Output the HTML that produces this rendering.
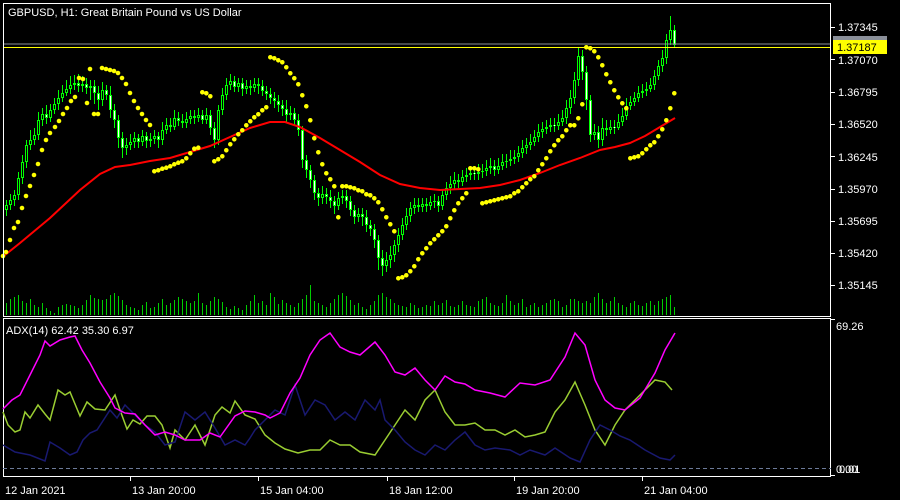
<!DOCTYPE html><html><head><meta charset="utf-8"><style>
body{margin:0;background:#000;width:900px;height:500px;overflow:hidden}
svg{display:block}
text{font-family:"Liberation Sans",sans-serif;font-size:11px;fill:#fff}
</style></head><body>
<svg width="900" height="500" xmlns="http://www.w3.org/2000/svg">
<rect width="900" height="500" fill="#000"/>
<path fill="none" stroke="#0c0" stroke-width="1" d="M6.5 315v-12M10.5 315v-16M14.5 315v-18M18.5 315v-20M22.5 315v-14M26.5 315v-12M30.5 315v-16M34.5 315v-10M38.5 315v-8M42.5 315v-12M46.5 315v-7M50.5 315v-4M54.5 315v-2M58.5 315v-8M62.5 315v-10M66.5 315v-11M70.5 315v-10M74.5 315v-9M78.5 315v-7M82.5 315v-10M86.5 315v-15M90.5 315v-20M94.5 315v-17M98.5 315v-16M102.5 315v-15M106.5 315v-16M110.5 315v-20M114.5 315v-22M118.5 315v-19M122.5 315v-15M126.5 315v-10M130.5 315v-8M134.5 315v-7M138.5 315v-5M142.5 315v-10M146.5 315v-13M150.5 315v-7M154.5 315v-8M158.5 315v-12M162.5 315v-16M166.5 315v-10M170.5 315v-12M174.5 315v-15M178.5 315v-18M182.5 315v-16M186.5 315v-14M190.5 315v-12M194.5 315v-14M198.5 315v-22M202.5 315v-12M206.5 315v-10M210.5 315v-14M214.5 315v-18M218.5 315v-16M222.5 315v-13M226.5 315v-8M230.5 315v-6M234.5 315v-9M238.5 315v-7M242.5 315v-5M246.5 315v-10M250.5 315v-14M254.5 315v-20M258.5 315v-12M262.5 315v-14M266.5 315v-10M270.5 315v-22M274.5 315v-18M278.5 315v-11M282.5 315v-15M286.5 315v-12M290.5 315v-10M294.5 315v-8M298.5 315v-12M302.5 315v-16M306.5 315v-20M310.5 315v-30M314.5 315v-14M318.5 315v-12M322.5 315v-10M326.5 315v-8M330.5 315v-12M334.5 315v-16M338.5 315v-20M342.5 315v-22M346.5 315v-19M350.5 315v-15M354.5 315v-10M358.5 315v-12M362.5 315v-8M366.5 315v-6M370.5 315v-10M374.5 315v-14M378.5 315v-20M382.5 315v-22M386.5 315v-18M390.5 315v-16M394.5 315v-12M398.5 315v-10M402.5 315v-9M406.5 315v-8M410.5 315v-12M414.5 315v-10M418.5 315v-7M422.5 315v-8M426.5 315v-10M430.5 315v-9M434.5 315v-14M438.5 315v-10M442.5 315v-12M446.5 315v-15M450.5 315v-9M454.5 315v-8M458.5 315v-10M462.5 315v-14M466.5 315v-10M470.5 315v-9M474.5 315v-8M478.5 315v-14M482.5 315v-16M486.5 315v-18M490.5 315v-12M494.5 315v-10M498.5 315v-9M502.5 315v-12M506.5 315v-20M510.5 315v-14M514.5 315v-10M518.5 315v-12M522.5 315v-16M526.5 315v-8M530.5 315v-10M534.5 315v-12M538.5 315v-8M542.5 315v-10M546.5 315v-12M550.5 315v-15M554.5 315v-16M558.5 315v-14M562.5 315v-8M566.5 315v-10M570.5 315v-16M574.5 315v-16M578.5 315v-14M582.5 315v-12M586.5 315v-14M590.5 315v-12M594.5 315v-18M598.5 315v-22M602.5 315v-16M606.5 315v-12M610.5 315v-14M614.5 315v-18M618.5 315v-12M622.5 315v-10M626.5 315v-8M630.5 315v-12M634.5 315v-14M638.5 315v-10M642.5 315v-9M646.5 315v-12M650.5 315v-14M654.5 315v-10M658.5 315v-14M662.5 315v-16M666.5 315v-18M670.5 315v-20M674.5 315v-8"/>
<path fill="none" stroke="#0f0" stroke-width="1" d="M6.5 200V216M10.5 194V210M14.5 190V206M18.5 172V200M22.5 155V184M26.5 140V168M30.5 130V150M34.5 128V145M38.5 112V140M42.5 108V126M46.5 105V124M50.5 104V122M54.5 98V114M58.5 90V110M62.5 85V102M66.5 80V96M70.5 76V94M74.5 75V90M78.5 74V92M82.5 76V92M86.5 78V94M90.5 80V100M94.5 80V104M98.5 86V110M102.5 82V106M106.5 85V100M110.5 86V118M114.5 104V128M118.5 115V148M122.5 132V158M126.5 138V155M130.5 134V150M134.5 132V148M138.5 134V148M142.5 130V146M146.5 132V148M150.5 133V147M154.5 130V144M158.5 132V148M162.5 122V145M166.5 118V134M170.5 118V132M174.5 110V130M178.5 112V126M182.5 114V128M186.5 112V128M190.5 110V124M194.5 110V124M198.5 108V122M202.5 110V124M206.5 108V124M210.5 110V135M214.5 122V148M218.5 105V145M222.5 88V115M226.5 78V100M230.5 74V90M234.5 76V92M238.5 78V92M242.5 78V96M246.5 80V94M250.5 80V95M254.5 78V92M258.5 78V94M262.5 80V96M266.5 86V100M270.5 88V104M274.5 92V108M278.5 95V112M282.5 100V116M286.5 100V122M290.5 106V120M294.5 108V126M298.5 114V136M302.5 126V168M306.5 155V178M310.5 165V188M314.5 175V200M318.5 188V206M322.5 186V204M326.5 188V204M330.5 190V208M334.5 196V214M338.5 192V210M342.5 190V204M346.5 190V208M350.5 196V216M354.5 205V224M358.5 208V222M362.5 208V226M366.5 210V232M370.5 220V236M374.5 224V248M378.5 235V270M382.5 250V276M386.5 252V272M390.5 246V268M394.5 240V262M398.5 228V252M402.5 218V240M406.5 208V230M410.5 202V222M414.5 198V214M418.5 198V212M422.5 198V212M426.5 198V212M430.5 196V210M434.5 194V208M438.5 196V212M442.5 190V210M446.5 182V200M450.5 176V194M454.5 172V190M458.5 174V188M462.5 170V186M466.5 168V182M470.5 166V180M474.5 166V180M478.5 164V180M482.5 164V178M486.5 160V176M490.5 158V174M494.5 160V176M498.5 158V174M502.5 154V170M506.5 154V168M510.5 150V166M514.5 150V164M518.5 146V162M522.5 140V158M526.5 138V154M530.5 134V150M534.5 130V146M538.5 124V142M542.5 122V138M546.5 120V134M550.5 118V132M554.5 118V132M558.5 114V130M562.5 110V126M566.5 100V124M570.5 90V114M574.5 72V104M578.5 48V86M582.5 50V80M586.5 66V110M590.5 95V142M594.5 124V140M598.5 126V148M602.5 118V146M606.5 120V136M610.5 120V134M614.5 120V134M618.5 114V130M622.5 108V126M626.5 98V120M630.5 96V110M634.5 92V106M638.5 86V102M642.5 84V98M646.5 82V96M650.5 78V92M654.5 70V90M658.5 60V80M662.5 50V72M666.5 34V64M670.5 16V45M674.5 25V48"/>
<path fill="none" stroke="#0f0" stroke-width="3" d="M6.5 210V205M10.5 205V200M14.5 200V195M18.5 195V178M22.5 178V162M26.5 162V145M30.5 145V140M34.5 140V135M38.5 135V120M42.5 120V114M46.5 114V118M50.5 118V110M54.5 110V104M58.5 104V98M62.5 98V93M66.5 93V89M70.5 89V85M74.5 85V83M78.5 83V86M82.5 86V84M86.5 84V88M90.5 88V86M94.5 86V93M98.5 93V100M102.5 100V90M106.5 90V95M110.5 95V110M114.5 110V120M118.5 120V138M122.5 138V148M126.5 148V145M130.5 145V142M134.5 142V138M138.5 138V142M142.5 142V136M146.5 136V141M150.5 141V139M154.5 139V136M158.5 136V140M162.5 140V130M166.5 130V125M170.5 125V127M174.5 127V118M178.5 118V121M182.5 121V123M186.5 123V119M190.5 119V116M194.5 116V118M198.5 118V115M202.5 115V120M206.5 120V115M210.5 115V128M214.5 128V140M218.5 140V110M222.5 110V95M226.5 95V85M230.5 85V81M234.5 81V87M238.5 87V83M242.5 83V89M246.5 89V86M250.5 86V88M254.5 88V84M258.5 84V86M262.5 86V91M266.5 91V94M270.5 94V98M274.5 98V101M278.5 101V105M282.5 105V109M286.5 109V115M290.5 115V113M294.5 113V120M298.5 120V130M302.5 130V160M306.5 160V170M310.5 170V180M314.5 180V193M318.5 193V198M322.5 198V194M326.5 194V197M330.5 197V201M334.5 201V206M338.5 206V198M342.5 198V196M346.5 196V201M350.5 201V210M354.5 210V217M358.5 217V214M362.5 214V217M366.5 217V225M370.5 225V229M374.5 229V240M378.5 240V258M382.5 258V266M386.5 266V260M390.5 260V255M394.5 255V245M398.5 245V235M402.5 235V225M406.5 225V216M410.5 216V208M414.5 208V205M418.5 205V207M422.5 207V204M426.5 204V206M430.5 206V202M434.5 202V201M438.5 201V206M442.5 206V195M446.5 195V188M450.5 188V184M454.5 184V180M458.5 180V182M462.5 182V177M466.5 177V175M470.5 175V173M474.5 173V174M478.5 174V172M482.5 172V171M486.5 171V168M490.5 168V166M494.5 166V170M498.5 170V166M502.5 166V162M506.5 162V161M510.5 161V159M514.5 159V157M518.5 157V153M522.5 153V148M526.5 148V145M530.5 145V142M534.5 142V137M538.5 137V132M542.5 132V129M546.5 129V127M550.5 127V125M554.5 125V126M558.5 126V122M562.5 122V118M566.5 118V108M570.5 108V98M574.5 98V80M578.5 80V56M582.5 56V72M586.5 72V100M590.5 100V135M594.5 135V132M598.5 132V140M602.5 140V128M606.5 128V130M610.5 130V127M614.5 127V128M618.5 128V122M622.5 122V116M626.5 116V106M630.5 106V102M634.5 102V98M638.5 98V93M642.5 93V91M646.5 91V89M650.5 89V85M654.5 85V76M658.5 76V66M662.5 66V58M666.5 58V40M670.5 40V30M674.5 30V45"/>
<path fill="none" stroke="#000" stroke-width="1" d="M6.5 209V206M10.5 204V201M14.5 199V196M18.5 194V179M22.5 177V163M26.5 161V146M30.5 144V141M34.5 139V136M38.5 134V121M42.5 119V115M50.5 117V111M54.5 109V105M58.5 103V99M62.5 97V94M66.5 92V90M70.5 88V86M82.5 85V85M90.5 87V87M102.5 99V91M126.5 147V146M130.5 144V143M134.5 141V139M142.5 141V137M154.5 138V137M162.5 139V131M166.5 129V126M174.5 126V119M186.5 122V120M190.5 118V117M198.5 117V116M206.5 119V116M218.5 139V111M222.5 109V96M226.5 94V86M230.5 84V82M238.5 86V84M246.5 88V87M254.5 87V85M290.5 114V114M322.5 197V195M338.5 205V199M342.5 197V197M358.5 216V215M386.5 265V261M390.5 259V256M394.5 254V246M398.5 244V236M402.5 234V226M406.5 224V217M410.5 215V209M414.5 207V206M422.5 206V205M430.5 205V203M442.5 205V196M446.5 194V189M450.5 187V185M454.5 183V181M462.5 181V178M466.5 176V176M470.5 174V174M478.5 173V173M486.5 170V169M490.5 167V167M498.5 169V167M502.5 165V163M510.5 160V160M514.5 158V158M518.5 156V154M522.5 152V149M526.5 147V146M530.5 144V143M534.5 141V138M538.5 136V133M542.5 131V130M550.5 126V126M558.5 125V123M562.5 121V119M566.5 117V109M570.5 107V99M574.5 97V81M578.5 79V57M594.5 134V133M602.5 139V129M610.5 129V128M618.5 127V123M622.5 121V117M626.5 115V107M630.5 105V103M634.5 101V99M638.5 97V94M642.5 92V92M650.5 88V86M654.5 84V77M658.5 75V67M662.5 65V59M666.5 57V41M670.5 39V31"/>
<path fill="none" stroke="#fff" stroke-width="1" d="M46.5 115V117M78.5 84V85M86.5 85V87M94.5 87V92M98.5 94V99M106.5 91V94M110.5 96V109M114.5 111V119M118.5 121V137M122.5 139V147M138.5 139V141M146.5 137V140M158.5 137V139M170.5 126V126M178.5 119V120M182.5 122V122M194.5 117V117M202.5 116V119M210.5 116V127M214.5 129V139M234.5 82V86M242.5 84V88M250.5 87V87M258.5 85V85M262.5 87V90M266.5 92V93M270.5 95V97M274.5 99V100M278.5 102V104M282.5 106V108M286.5 110V114M294.5 114V119M298.5 121V129M302.5 131V159M306.5 161V169M310.5 171V179M314.5 181V192M318.5 194V197M326.5 195V196M330.5 198V200M334.5 202V205M346.5 197V200M350.5 202V209M354.5 211V216M362.5 215V216M366.5 218V224M370.5 226V228M374.5 230V239M378.5 241V257M382.5 259V265M418.5 206V206M426.5 205V205M438.5 202V205M458.5 181V181M474.5 174V173M494.5 167V169M554.5 126V125M582.5 57V71M586.5 73V99M590.5 101V134M598.5 133V139M606.5 129V129M614.5 128V127M674.5 31V44"/>
<polyline fill="none" stroke="#f00" stroke-width="2" points="5,255 20,243 50,218 80,190 100,174 115,167 130,165 150,161 170,158 190,152 210,146 230,137 250,128 270,122 285,122 300,127 320,138 340,150 360,162 380,175 400,184 420,188 440,190 460,189 480,188 500,185 520,180 540,173 560,165 580,158 600,150 615,147 630,143 645,136 660,127 675,118"/>
<path fill="none" stroke="#ff0" stroke-width="4.6" stroke-linecap="round" d="M3 256h0M6 252h0M10 240h0M14 228h0M18 222h0M22 208h0M26 196h0M30 186h0M34 175h0M38 164h0M42 150h0M46 140h0M50 133h0M55 127h0M59 121h0M63 114h0M67 108h0M71 101h0M75 97h0M79 78h0M83 79h0M87 103h0M94 114h0M98 114h0M90 69h0M102 68h0M106 69h0M110 70h0M114 71h0M118 73h0M122 78h0M126 84h0M130 93h0M134 101h0M138 108h0M142 114h0M146 120h0M150 125h0M154.3 171.3h0M158.3 170.3h0M162.3 168.7h0M166.3 167.7h0M170.3 166.3h0M174.3 164.3h0M178.3 162.7h0M182.3 161.3h0M186.3 158.3h0M190.3 153.3h0M194.3 148.7h0M198.3 147.7h0M202.3 92.3h0M206.3 93.3h0M210.3 96.3h0M214.3 161.3h0M218.3 159.3h0M222.3 156.3h0M226.3 150.3h0M230.3 144.3h0M234.3 139.3h0M238.3 134.3h0M242.3 130.3h0M246.3 125.3h0M250.3 121.3h0M254.3 117.3h0M258.3 114.3h0M262.3 110.3h0M266.3 107.3h0M270.3 57.3h0M274.3 58.3h0M278.3 60.3h0M282.3 62.3h0M286.3 67.3h0M290.3 73.3h0M294.3 78.3h0M298.3 84.3h0M302.3 95.3h0M306.3 106.3h0M310.3 120.3h0M314.3 138.3h0M318.3 152.3h0M322.3 164.3h0M326.3 173.3h0M330.3 179.3h0M334.3 186.3h0M338.3 217.3h0M342.3 186.3h0M346.3 186.3h0M350.3 187.3h0M354.3 188.3h0M358.3 190.3h0M362.3 191.3h0M366.3 194.3h0M370.3 195.3h0M374.3 198.3h0M378.3 202.3h0M382.3 209.3h0M386.3 217.3h0M390.3 224.3h0M394.3 231.3h0M398.3 278.3h0M402.3 277.3h0M406.3 275.3h0M410.3 271.3h0M414.3 266.3h0M418.3 259.3h0M422.3 253.3h0M426.3 248.3h0M430.3 243.3h0M434.3 239.3h0M438.3 235.3h0M442.3 231.3h0M446.3 226.3h0M450.3 218.3h0M454.3 210.3h0M458.3 203.3h0M462.3 198.3h0M466.3 193.3h0M470.3 168.3h0M474.3 168.3h0M478.3 169.3h0M482.3 203.3h0M486.3 202.3h0M490.3 201.3h0M494.3 200.3h0M498.3 199.3h0M502.3 198.3h0M506.3 197.3h0M510.3 196.3h0M514.3 193.3h0M518.3 191.3h0M522.3 187.3h0M526.3 183.3h0M530.3 179.3h0M534.3 176.3h0M538.3 170.3h0M542.3 164.3h0M546.3 158.3h0M550.3 151.3h0M554.3 145.3h0M558.3 140.3h0M562.3 136.3h0M566.3 130.3h0M570.3 125.3h0M574.3 125.3h0M578.3 118.3h0M582.3 104.3h0M586.3 47.3h0M590.3 48.3h0M594.3 51.3h0M598.3 57.3h0M602.3 65.3h0M606.3 74.3h0M610.3 82.3h0M614.3 90.3h0M618.3 97.3h0M622.3 103.3h0M626.3 108.3h0M630.3 158.3h0M634.3 157.3h0M638.3 156.3h0M642.3 153.3h0M646.3 149.3h0M650.3 145.3h0M654.3 142.3h0M658.3 136.3h0M662.3 129.3h0M666.3 120.3h0M670.3 108.3h0M674.3 93.3h0"/>
<line x1="3" y1="44" x2="831" y2="44" stroke="#8a8f99" stroke-width="1"/>
<line x1="3" y1="47.5" x2="831" y2="47.5" stroke="#ff0" stroke-width="1"/>
<rect x="3.5" y="3.5" width="827" height="313" fill="none" stroke="#fff"/>
<rect x="3.5" y="318.5" width="827" height="158" fill="none" stroke="#fff"/>
<line x1="3" y1="468.5" x2="831" y2="468.5" stroke="#6c7a99" stroke-dasharray="4,3"/>
<polyline fill="none" stroke="#9acd32" stroke-width="1.5" points="3,412 8,425 15,432 20,430 25,412 30,418 38,405 45,414 50,420 58,390 65,395 70,392 80,416 87,402 95,409 105,410 115,395 120,410 127,429 133,420 140,424 147,416 155,416 162,425 170,448 175,430 185,440 195,425 205,445 215,415 222,407 230,413 235,401 245,415 255,419 265,435 275,443 285,449 298,453 310,450 320,450 330,440 340,445 350,445 360,452 375,455 385,440 395,425 405,410 415,420 425,400 435,390 445,412 455,425 465,425 475,423 485,430 495,430 505,435 515,430 525,437 535,435 545,432 555,412 565,400 575,382 585,405 595,430 605,445 615,425 625,410 640,395 655,380 665,382 672,390"/>
<polyline fill="none" stroke="#191970" stroke-width="1.5" points="3,445 15,452 30,455 45,461 50,442 60,448 70,455 77,452 83,440 90,433 97,430 110,410 117,418 125,405 135,415 145,425 155,432 165,445 175,442 185,412 195,420 205,412 215,428 225,445 235,440 245,445 250,438 255,430 265,420 275,410 285,415 295,385 305,415 315,400 325,405 335,420 345,412 355,420 365,400 375,410 380,400 385,420 395,430 405,442 415,450 425,455 435,445 445,450 455,440 465,432 475,445 485,450 495,448 510,450 520,455 530,450 545,455 555,448 570,458 580,462 590,440 600,425 610,430 620,436 630,440 645,450 660,458 670,460 675,455"/>
<polyline fill="none" stroke="#f0f" stroke-width="1.5" points="3,409 12,400 20,395 30,375 40,355 45,341 50,346 60,340 70,337 75,336 82,350 90,363 100,382 110,398 115,408 125,413 135,414 145,425 155,435 165,432 175,435 185,440 200,440 210,433 220,437 235,416 245,411 255,412 265,415 270,418 280,413 290,393 300,378 310,355 320,340 330,333 340,347 350,352 360,355 375,342 385,355 395,372 405,375 415,368 425,380 435,390 445,376 455,382 465,384 475,390 490,393 505,397 520,383 535,385 550,380 565,357 575,333 585,345 595,380 605,400 615,408 625,410 640,398 655,373 665,350 675,333"/>
<text x="8" y="16">GBPUSD, H1:  Great Britain Pound vs US Dollar</text>
<text x="6" y="334">ADX(14) 62.42 35.30 6.97</text>
<path stroke="#fff" d="M831 27.5h4M831 59.5h4M831 92.5h4M831 124.5h4M831 156.5h4M831 189.5h4M831 221.5h4M831 253.5h4M831 285.5h4M831 319.5h4M831 475.5h4M130.5 477v4M258.5 477v4M387.5 477v4M514.5 477v4M642.5 477v4"/>
<text x="838" y="31">1.37345</text>
<text x="838" y="64">1.37070</text>
<text x="838" y="96">1.36795</text>
<text x="838" y="128">1.36520</text>
<text x="838" y="161">1.36245</text>
<text x="838" y="193">1.35970</text>
<text x="838" y="225">1.35695</text>
<text x="838" y="257">1.35420</text>
<text x="838" y="289">1.35145</text>
<rect x="833" y="36" width="54" height="4" fill="#8a8f99"/>
<rect x="833" y="40" width="54" height="14" fill="#ff0"/>
<text x="837" y="51" style="fill:#000">1.37187</text>
<text x="836" y="330">69.26</text>
<text x="836" y="473">0.00</text><text x="839" y="473">0.01</text>
<text x="5" y="494">12 Jan 2021</text>
<text x="132" y="494">13 Jan 20:00</text>
<text x="260" y="494">15 Jan 04:00</text>
<text x="389" y="494">18 Jan 12:00</text>
<text x="516" y="494">19 Jan 20:00</text>
<text x="644" y="494">21 Jan 04:00</text>
</svg>
</body></html>
